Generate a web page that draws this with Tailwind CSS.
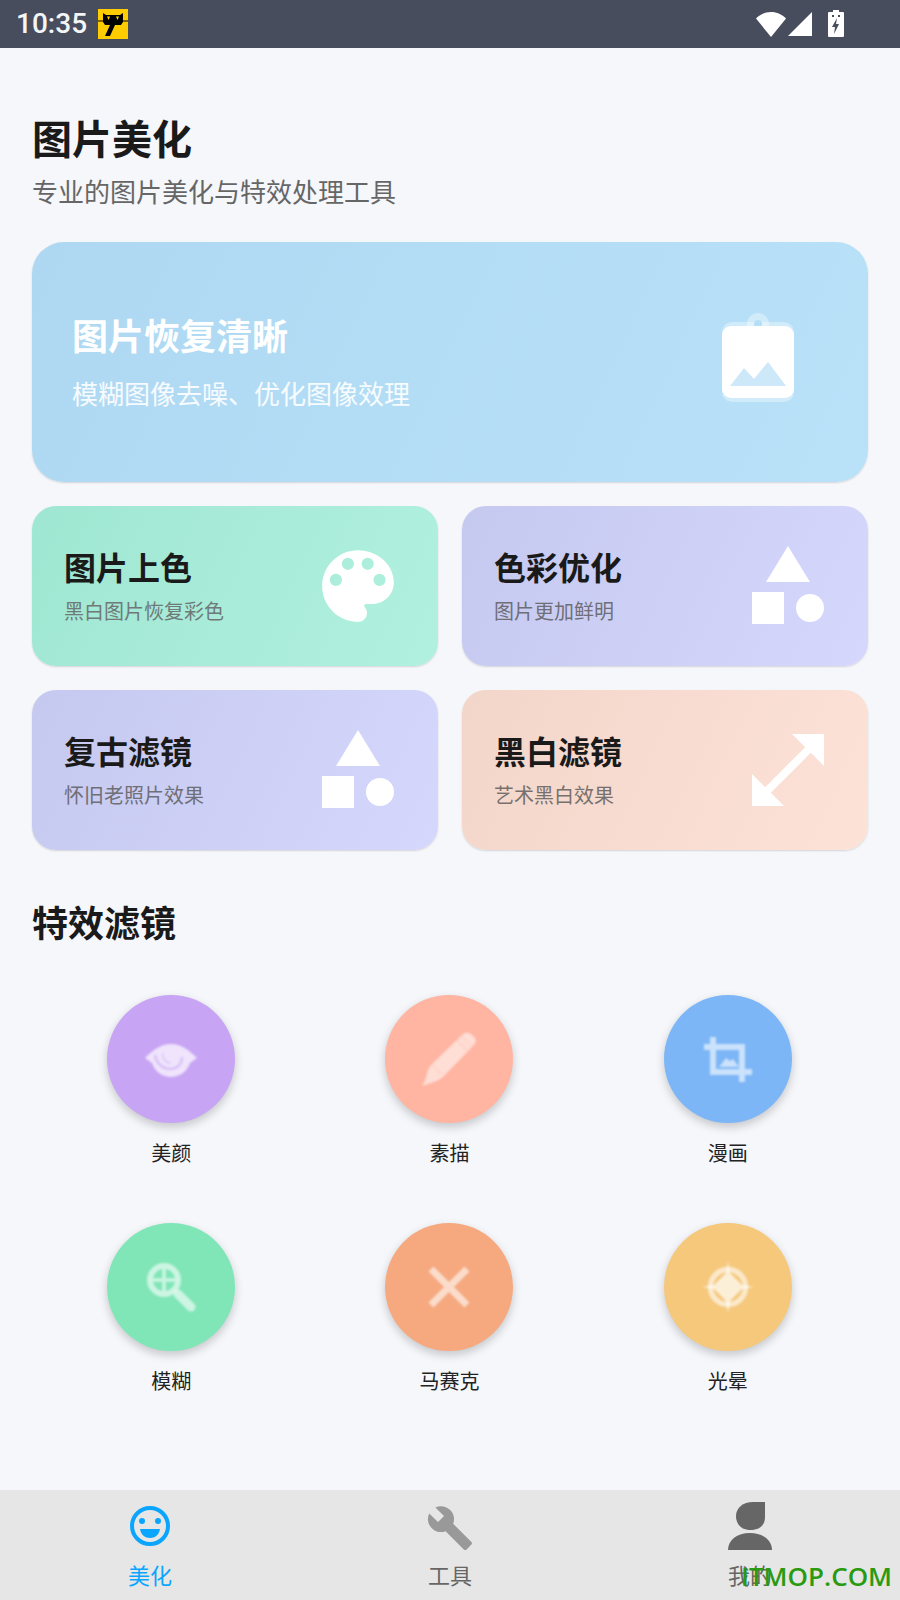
<!DOCTYPE html>
<html lang="zh-CN">
<head>
    <meta charset="UTF-8">
    <meta name="viewport" content="width=device-width, initial-scale=1.0">
    <title>图片美化</title>
    <script src="https://cdn.jsdelivr.net/npm/@tailwindcss/browser@4"></script>
</head>
<body class="bg-[#f5f7fb] font-['Noto_Sans_CJK_SC',sans-serif]">
    <div class="relative w-[900px] h-[1600px] overflow-hidden flex flex-col">
        <!-- Status bar -->
        <div class="h-12 shrink-0 bg-[#484d5e] flex items-center text-white">
            <span class="ml-[16px] font-['Roboto',sans-serif] font-medium text-[28px] leading-none text-[#f4f5f7]">10:35</span>
            <svg class="ml-[11px]" width="30" height="30" viewBox="0 0 30 30">
                <rect width="30" height="30" fill="#ffcc00"/>
                <path d="M5 4l3 2h14l3-2v9l-2 3h-6l-5 11H7l5-11H7l-2-3z" fill="#000"/>
                <path d="M9 7.500l1.500 3.500 1.500-3.500zM18 7.500l1.500 3.500 1.500-3.500z" fill="#ffd800"/>
                <path d="M0 12h6M24 12h6" stroke="#000" stroke-width="1"/>
            </svg>
            <div class="ml-auto mb-[2px] flex items-end gap-[1px] mr-[56px]">
                <svg width="30" height="26" viewBox="0 0 30 26"><path d="M0 7.500C4 3.500 9 1 15 1s11 2.500 15 6.500L15 26z" fill="#fff"/></svg>
                <svg width="26" height="26" viewBox="0 0 26 26"><path d="M25 1v24H1z" fill="#fff"/></svg>
                <svg class="ml-[14px]" width="16" height="27" viewBox="0 0 16 27">
                    <path d="M5 0h6v2h4a1 1 0 0 1 1 1v23a1 1 0 0 1-1 1H1a1 1 0 0 1-1-1V3a1 1 0 0 1 1-1h4z" fill="#fff"/>
                    <path d="M9 8l-5 9h3l-1 7 5-10H8z" fill="#484d5e"/>
                    <path d="M4 5h2v2H4zM10 5h2v2h-2z" fill="#484d5e"/>
                </svg>
            </div>
        </div>

        <main class="flex-1 px-8">
            <h1 class="mt-[63px] text-[40px] leading-[52px] font-bold text-[#1a1a1a]">图片美化</h1>
            <p class="mt-[9px] text-[26px] leading-[38px] text-[#666]">专业的图片美化与特效处理工具</p>

            <!-- Main card -->
            <div class="mt-[32px] h-[240px] rounded-[32px] bg-linear-115 from-[#aed8f2] to-[#b9e2f9] shadow-[0_1px_2px_rgba(0,0,0,0.14)] flex items-center justify-between pl-10 pr-[74px]">
                <div class="text-white mb-[3px]">
                    <h2 class="text-[36px] leading-[48px] font-bold">图片恢复清晰</h2>
                    <p class="mt-[17px] text-[26px] leading-[36px] text-white/90">模糊图像去噪、优化图像效理</p>
                </div>
                <svg class="mt-[-9px]" width="72" height="89" viewBox="0 0 72 89">
                    <circle cx="36" cy="11" r="11" fill="#fff" fill-opacity=".35"/>
                    <rect y="9" width="72" height="80" rx="10" fill="#fff" fill-opacity=".35"/>
                    <circle cx="36" cy="11" r="4" fill="#b6dff6"/>
                    <rect y="13" width="72" height="72" rx="9" fill="#fff"/>
                    <path d="M8 73l14-18 10 11 14-17 18 24z" fill="#cde8f8"/>
                </svg>
            </div>

            <!-- Feature cards -->
            <div class="mt-6 grid grid-cols-2 gap-x-6 gap-y-6">
                <div class="h-40 rounded-3xl bg-linear-115 from-[#9fe7d2] to-[#b1f0df] shadow-[0_1px_2px_rgba(0,0,0,0.14)] flex items-center justify-between pl-8 pr-[37px]">
                    <div class="mb-[3px]">
                        <h3 class="text-[32px] leading-[44px] font-bold text-[#1a1a1a]">图片上色</h3>
                        <p class="mt-[9px] text-[20px] leading-[28px] text-[#6f7a78]">黑白图片恢复彩色</p>
                    </div>
                    <svg width="86" height="86" viewBox="0 0 24 24" fill="#fff" fill-rule="evenodd"><path d="M12 2C6.490 2 2 6.490 2 12s4.490 10 10 10c1.380 0 2.500-1.120 2.500-2.500 0-.61-.23-1.200-.64-1.670-.08-.1-.13-.21-.13-.33 0-.28.22-.5.5-.5H16c3.310 0 6-2.690 6-6 0-4.960-4.490-9-10-9zM4.130 10.300a1.700 1.700 0 1 0 3.400 0a1.700 1.700 0 1 0-3.400 0zM7.470 5.800a1.700 1.700 0 1 0 3.400 0a1.700 1.700 0 1 0-3.400 0zM13 5.800a1.700 1.700 0 1 0 3.400 0a1.700 1.700 0 1 0-3.400 0zM16.300 10.300a1.700 1.700 0 1 0 3.400 0a1.700 1.700 0 1 0-3.400 0z"/></svg>
                </div>
                <div class="h-40 rounded-3xl bg-linear-115 from-[#c6c9ef] to-[#d5d7fd] shadow-[0_1px_2px_rgba(0,0,0,0.14)] flex items-center justify-between pl-8 pr-8">
                    <div class="mb-[3px]">
                        <h3 class="text-[32px] leading-[44px] font-bold text-[#1a1a1a]">色彩优化</h3>
                        <p class="mt-[9px] text-[20px] leading-[28px] text-[#6f6f78]">图片更加鲜明</p>
                    </div>
                    <svg width="96" height="96" viewBox="0 0 24 24" fill="#fff"><path d="M12 2l-5.500 9h11z"/><circle cx="17.500" cy="17.500" r="3.500"/><path d="M3 13.500h8v8H3z"/></svg>
                </div>
                <div class="h-40 rounded-3xl bg-linear-115 from-[#c6c9ef] to-[#d5d7fd] shadow-[0_1px_2px_rgba(0,0,0,0.14)] flex items-center justify-between pl-8 pr-8">
                    <div class="mb-[3px]">
                        <h3 class="text-[32px] leading-[44px] font-bold text-[#1a1a1a]">复古滤镜</h3>
                        <p class="mt-[9px] text-[20px] leading-[28px] text-[#6f6f78]">怀旧老照片效果</p>
                    </div>
                    <svg width="96" height="96" viewBox="0 0 24 24" fill="#fff"><path d="M12 2l-5.500 9h11z"/><circle cx="17.500" cy="17.500" r="3.500"/><path d="M3 13.500h8v8H3z"/></svg>
                </div>
                <div class="h-40 rounded-3xl bg-linear-115 from-[#f3d6ca] to-[#fde2d8] shadow-[0_1px_2px_rgba(0,0,0,0.14)] flex items-center justify-between pl-8 pr-8">
                    <div class="mb-[3px]">
                        <h3 class="text-[32px] leading-[44px] font-bold text-[#1a1a1a]">黑白滤镜</h3>
                        <p class="mt-[9px] text-[20px] leading-[28px] text-[#77716e]">艺术黑白效果</p>
                    </div>
                    <svg width="96" height="96" viewBox="0 0 24 24" fill="#fff"><path d="M21 11V3h-8l3.290 3.290-10 10L3 13v8h8l-3.290-3.290 10-10z"/></svg>
                </div>
            </div>

            <h2 class="mt-[47px] text-[36px] leading-[48px] font-bold text-[#1a1a1a]">特效滤镜</h2>

            <!-- Effects grid -->
            <div class="mt-[50px] mr-[1px] grid grid-cols-3 gap-y-[56px]">
                <div class="flex flex-col items-center">
                    <div class="size-32 rounded-full bg-[#c8a4f4] shadow-[0_4px_10px_rgba(0,0,0,0.2)] flex items-center justify-center">
                        <svg class="blur-[0.8px]" width="64" height="64" viewBox="0 0 64 64">
                            <path d="M6 31C14 23 22 17 32 17s18 6 26 14l-7 5C48 45 40 50 32 50s-16-5-19-14z" fill="#fff" fill-opacity=".7"/>
                            <path d="M16 28c1 8 8 14 15 14s12-5 12-12" fill="none" stroke="#c8a4f4" stroke-opacity=".55" stroke-width="2.500"/>
                            <path d="M24 26c-1 6 3 10 8 10" fill="none" stroke="#c8a4f4" stroke-opacity=".35" stroke-width="2"/>
                        </svg>
                    </div>
                    <span class="mt-[16px] text-[20px] leading-[28px] text-[#222]">美颜</span>
                </div>
                <div class="flex flex-col items-center">
                    <div class="size-32 rounded-full bg-[#ffb5a2] shadow-[0_4px_10px_rgba(0,0,0,0.2)] flex items-center justify-center">
                        <svg class="blur-[0.8px]" width="64" height="64" viewBox="0 0 64 64">
                            <path d="M5 59q3-4 5-12 1-6 5-10L46 7q4-3 8 0l4 4q2 4-1 7L27 49q-4 4-10 6z" fill="#fff" fill-opacity=".55"/>
                            <path d="M40 13l11 11M44 9l11 11M15 37l9 10" fill="none" stroke="#ffb5a2" stroke-opacity=".3" stroke-width="1.500"/>
                        </svg>
                    </div>
                    <span class="mt-[16px] text-[20px] leading-[28px] text-[#222]">素描</span>
                </div>
                <div class="flex flex-col items-center">
                    <div class="size-32 rounded-full bg-[#7cb6f6] shadow-[0_4px_10px_rgba(0,0,0,0.2)] flex items-center justify-center">
                        <svg class="blur-[0.8px]" width="64" height="64" viewBox="0 0 64 64">
                            <path d="M17 10v35h39M8 20h38v35" fill="none" stroke="#fff" stroke-opacity=".6" stroke-width="6"/>
                            <path d="M23 40l7-9 4 3 3-2 6 8z" fill="#fff" fill-opacity=".6"/>
                        </svg>
                    </div>
                    <span class="mt-[16px] text-[20px] leading-[28px] text-[#222]">漫画</span>
                </div>
                <div class="flex flex-col items-center">
                    <div class="size-32 rounded-full bg-[#80e6b8] shadow-[0_4px_10px_rgba(0,0,0,0.2)] flex items-center justify-center">
                        <svg class="blur-[0.8px]" width="64" height="64" viewBox="0 0 64 64">
                            <circle cx="25" cy="25" r="14" fill="none" stroke="#fff" stroke-opacity=".6" stroke-width="6"/>
                            <path d="M25 14v22M14 25h22" stroke="#fff" stroke-opacity=".6" stroke-width="3.500"/>
                            <path d="M39 39l13 13" stroke="#fff" stroke-opacity=".6" stroke-width="9" stroke-linecap="round"/>
                        </svg>
                    </div>
                    <span class="mt-[16px] text-[20px] leading-[28px] text-[#222]">模糊</span>
                </div>
                <div class="flex flex-col items-center">
                    <div class="size-32 rounded-full bg-[#f6a97f] shadow-[0_4px_10px_rgba(0,0,0,0.2)] flex items-center justify-center">
                        <svg class="blur-[0.8px]" width="64" height="64" viewBox="0 0 64 64">
                            <path d="M14 14l36 36M50 14L14 50" stroke="#fff" stroke-opacity=".6" stroke-width="7"/>
                        </svg>
                    </div>
                    <span class="mt-[16px] text-[20px] leading-[28px] text-[#222]">马赛克</span>
                </div>
                <div class="flex flex-col items-center">
                    <div class="size-32 rounded-full bg-[#f5c87c] shadow-[0_4px_10px_rgba(0,0,0,0.2)] flex items-center justify-center">
                        <svg class="blur-[0.8px]" width="64" height="64" viewBox="0 0 64 64">
                            <path d="M32 6l4 26-4 26-4-26zM6 32l26-4 26 4-26 4zM32 16l16 16-16 16-16-16z" fill="#fff" fill-opacity=".7"/>
                            <circle cx="32" cy="32" r="17.500" fill="none" stroke="#fff" stroke-opacity=".6" stroke-width="5.500"/>
                        </svg>
                    </div>
                    <span class="mt-[16px] text-[20px] leading-[28px] text-[#222]">光晕</span>
                </div>
            </div>
        </main>

        <!-- Bottom nav -->
        <nav class="h-[110px] shrink-0 bg-[#e6e6e6] grid grid-cols-3">
            <div class="flex flex-col items-center pt-[12px]">
                <svg width="48" height="52" viewBox="0 0 48 52">
                    <circle cx="24" cy="24" r="18" fill="none" stroke="#0aa5ff" stroke-width="4"/>
                    <circle cx="16" cy="19" r="3" fill="#0aa5ff"/>
                    <circle cx="32" cy="19" r="3" fill="#0aa5ff"/>
                    <path d="M14 27h20c-1 6-5 9-10 9s-9-3-10-9z" fill="#0aa5ff"/>
                </svg>
                <span class="mt-[5px] text-[22px] leading-[30px] text-[#0aa5ff]">美化</span>
            </div>
            <div class="flex flex-col items-center pt-[12px]">
                <svg width="48" height="52" viewBox="0 0 24 26" fill="#999"><path d="M22.700 20l-9.100-9.100c.9-2.300.4-5-1.500-6.900-2-2-5-2.400-7.400-1.300L9 7 6 10 1.600 5.700C.4 8.100.9 11.100 2.900 13.100c1.900 1.900 4.600 2.400 6.900 1.500l9.100 9.100c.4.400 1 .4 1.400 0l2.300-2.300c.5-.4.5-1.100.1-1.400z"/></svg>
                <span class="mt-[5px] text-[22px] leading-[30px] text-[#666]">工具</span>
            </div>
            <div class="flex flex-col items-center pt-[12px]">
                <svg width="48" height="52" viewBox="0 0 48 52" fill="#666">
                    <path d="M27 0h12v15c0 8-5 13-14.500 13S10 22 10 14C10 6 17 0 27 0z"/>
                    <path d="M2 48c0-10 9-17 22-17s22 7 22 17z"/>
                </svg>
                <span class="mt-[5px] text-[22px] leading-[30px] text-[#666]">我的</span>
            </div>
        </nav>

        <!-- Watermark -->
        <span class="absolute left-[741px] top-[1560px] font-['Open_Sans',sans-serif] font-semibold text-[26px] leading-[32px] text-[#2a9a10]">ITMOP.COM</span>
    </div>
</body>
</html>
